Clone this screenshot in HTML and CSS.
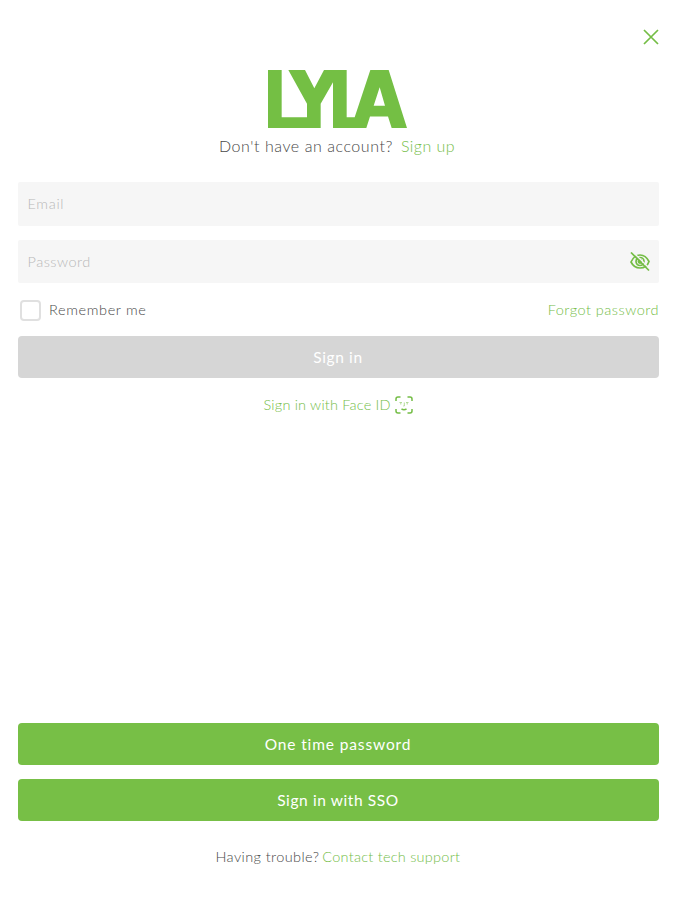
FILE: index.html
```html
<!DOCTYPE html>
<html lang="en">
<head>
<meta charset="utf-8">
<title>Sign in</title>
<link rel="stylesheet" href="styles.css">
</head>
<body>
<main class="page">
  <header class="topbar">
    <svg class="close" viewBox="0 0 16 16" role="img" aria-label="Close"><path d="M1 1 15 15M15 1 1 15"/></svg>
  </header>
  <svg class="logo" viewBox="205 46 417 172" preserveAspectRatio="none" role="img" aria-label="LYLA"><path fill-rule="evenodd" d="M205 46H246V186H322V146L266 46H316L344 100L373 46H441V186H465L512 46H567L622 218H576L565 184H511L500 218H400V82L363 146V218H205ZM540 97L522 152H556Z"/></svg>
  <p class="signup"><span class="ask">Don't have an account?</span><a class="link up">Sign up</a></p>
  <form class="form">
    <div class="field"><span class="email">Email</span></div>
    <div class="field"><span class="pass">Password</span>
      <svg class="eye" viewBox="0 0 20 20" aria-hidden="true"><path d="M1 10C3 5.500 6 3 10 3S17 5.500 19 9.500C17.500 14 14 16 10 16S3 14 1 10Z"/><circle cx="10" cy="9.500" r="4"/><circle class="pupil" cx="10" cy="9.500" r="2.400"/><path class="gap" d="M3 0 20 17"/><path d="M1 .5 19 18.500"/></svg>
    </div>
    <div class="options">
      <label class="remember"><span class="box"></span><span class="rem">Remember me</span></label>
      <a class="link forgot">Forgot password</a>
    </div>
    <div class="button disabled"><span class="signin">Sign in</span></div>
  </form>
  <div class="face"><a class="link faceid">Sign in with Face ID</a>
    <svg class="scan" viewBox="0 0 18 18" aria-hidden="true"><path d="M1 5V3Q1 1 3 1H5.500M12.500 1H15Q17 1 17 3V5M17 13V15Q17 17 15 17H12.500M5.500 17H3Q1 17 1 15V13M6.500 13Q9 14.300 11.500 13"/><path class="fine" d="M4.500 6.500H7M11 6.500H13.500M5.800 7V8.500M12.200 7V8.500M9.300 6.500V10H8.300"/></svg>
  </div>
  <footer class="footer">
    <div class="button"><span class="otp">One time password</span></div>
    <div class="button"><span class="sso">Sign in with SSO</span></div>
    <p class="help"><span class="trouble">Having trouble?</span><a class="link contact">Contact tech support</a></p>
  </footer>
</main>
</body>
</html>
```
FILE: styles.css
```css
* { box-sizing: border-box; }
body { margin: 0; background: #fff; color: #484848; font: 300 14.5px/20px Lato, "Liberation Sans", sans-serif; font-variant-ligatures: none; }
span, a { white-space: nowrap; }
.page { height: 900px; padding: 29px 16.500px 33px 17.500px; display: flex; flex-direction: column; }
.topbar { display: flex; justify-content: flex-end; height: 41px; }
.close { width: 16px; height: 16px; fill: none; stroke: #74bd45; stroke-width: 1.700; }
.logo { width: 139px; height: 58px; margin-left: 250.800px; fill: #74bf44; }
.signup { display: flex; gap: 8px; margin: 8px 0 0 201.500px; font-size: 16px; }
.link { color: #74bd48; }
.ask { letter-spacing: .55px; }
.up { letter-spacing: .45px; }
.email { letter-spacing: .7px; }
.pass { letter-spacing: .5px; }
.rem { letter-spacing: .64px; }
.forgot { letter-spacing: .5px; margin-right: -.5px; }
.signin { letter-spacing: .6px; }
.faceid { letter-spacing: .2px; }
.button .otp { letter-spacing: .87px; }
.sso { letter-spacing: .6px; }
.trouble { letter-spacing: .4px; }
.contact { letter-spacing: .25px; }
.form { display: flex; flex-direction: column; margin-top: 26px; }
.field { height: 44px; margin-bottom: 14px; padding: 0 9px 0 10px; display: flex; align-items: center; justify-content: space-between; background: #f6f6f6; color: #b8b8b8; border-radius: 2px; }
.field + .field { height: 43px; margin-bottom: 16px; }
.eye { width: 20px; height: 20px; fill: none; stroke: #74bd45; stroke-width: 1.700; }
.eye .pupil { fill: #74bd45; stroke: none; }
.eye .gap { stroke: #f6f6f6; stroke-width: 1.300; }
.options { display: flex; justify-content: space-between; align-items: center; height: 22px; margin-bottom: 15px; padding-left: 2.500px; }
.remember { display: flex; align-items: center; gap: 8px; }
.box { width: 21px; height: 21px; border: 2px solid #e0e0e0; border-radius: 4px; }
.button { height: 42px; display: flex; align-items: center; justify-content: center; border-radius: 4px; background: #77bf46; color: #fff; font-size: 15.500px; font-weight: 400; }
.disabled { background: #d6d6d6; }
.face { display: flex; align-items: center; gap: 4px; margin: 17px 0 0 246px; height: 20px; }
.scan { width: 18px; height: 18px; fill: none; stroke: #74bd45; stroke-width: 1.500; }
.scan .fine { stroke-width: .8; opacity: .7; }
.footer { margin-top: auto; display: flex; flex-direction: column; gap: 14px; }
.help { display: flex; gap: 3px; margin: 12px 0 0 198px; }
```
